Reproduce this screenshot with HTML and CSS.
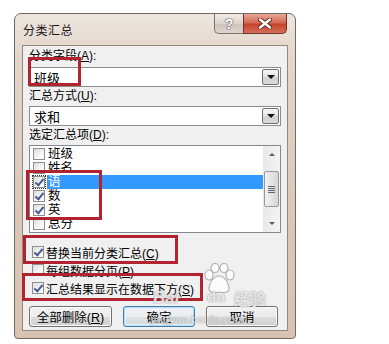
FILE: index.html
```html
<!DOCTYPE html>
<html lang="zh-CN">
<head>
    <meta charset="UTF-8">
    <title>分类汇总</title>
    <link rel="stylesheet" href="styles.css">
</head>
<body>
    <div class="window">
        <div class="titlebar">
            <span class="title">分类汇总</span>
            <div class="caption-btns">
                <span class="cap-btn help">?</span>
                <span class="cap-btn close">
                    <svg width="14" height="11" viewBox="0 0 14 11">
                        <path d="M2 1.5 L12 9.5 M12 1.5 L2 9.5" stroke="#5a2a22" stroke-width="4.2" stroke-linecap="round"/>
                        <path d="M2 1.5 L12 9.5 M12 1.5 L2 9.5" stroke="#fff" stroke-width="2.4" stroke-linecap="round"/>
                    </svg>
                </span>
            </div>
        </div>

        <div class="client">
            <div class="lbl lbl-first">分类字段(<u>A</u>):</div>
            <div class="combo">
                <span class="combo-text">班级</span>
                <span class="drop"><span class="tri"></span></span>
            </div>

            <div class="lbl">汇总方式(<u>U</u>):</div>
            <div class="combo">
                <span class="combo-text">求和</span>
                <span class="drop"><span class="tri"></span></span>
            </div>

            <div class="lbl">选定汇总项(<u>D</u>):</div>
            <div class="list">
                <div class="items">
                    <div class="item"><span class="cb"></span><span class="txt">班级</span></div>
                    <div class="item"><span class="cb"></span><span class="txt">姓名</span></div>
                    <div class="item selected"><span class="cb checked focus"></span><span class="txt">语</span></div>
                    <div class="item"><span class="cb checked"></span><span class="txt">数</span></div>
                    <div class="item"><span class="cb checked"></span><span class="txt">英</span></div>
                    <div class="item"><span class="cb"></span><span class="txt">总分</span></div>
                </div>
                <div class="vscroll">
                    <span class="sb-btn"><span class="arrow up"></span></span>
                    <span class="thumb"><span class="grip"></span></span>
                    <span class="sb-space"></span>
                    <span class="sb-btn"><span class="arrow down"></span></span>
                </div>
            </div>

            <div class="check-row first"><span class="cb checked"></span><span>替换当前分类汇总(<u>C</u>)</span></div>
            <div class="check-row"><span class="cb"></span><span>每组数据分页(<u>P</u>)</span></div>
            <div class="check-row"><span class="cb checked"></span><span>汇总结果显示在数据下方(<u>S</u>)</span></div>

            <div class="buttons">
                <button class="btn btn-wide">全部删除(<u>R</u>)</button>
                <button class="btn btn-default">确定</button>
                <button class="btn">取消</button>
            </div>
        </div>

        <!-- annotations drawn over the dialog -->
        <div class="mark mark-field"></div>
        <div class="mark mark-items"></div>
        <div class="mark mark-replace"></div>
        <div class="mark mark-below"></div>

        <div class="watermark">
            <svg class="paw" width="36" height="32" viewBox="0 0 36 32">
                <g fill="rgba(255,255,255,0.8)" stroke="rgba(110,110,110,0.5)" stroke-width="1.2">
                    <ellipse cx="8" cy="12" rx="4" ry="5"/>
                    <ellipse cx="14" cy="5" rx="4" ry="4.5"/>
                    <ellipse cx="23" cy="5" rx="4" ry="4.5"/>
                    <ellipse cx="29" cy="12" rx="4" ry="5"/>
                    <path d="M18 13 C12 13 8 21 8 25 C8 30 13 30 18 29 C23 30 28 30 28 25 C28 21 24 13 18 13 Z"/>
                </g>
            </svg>
            <span class="wm-bai">Bai</span>
            <span class="wm-du">du</span>
            <span class="wm-jy">经验</span>
            <span class="wm-url">jingyan.baidu.com</span>
        </div>
    </div>
</body>
</html>
```

FILE: styles.css
```css
body {
    margin: 0;
    background: #fff;
    font-family: "Liberation Sans", "Noto Sans CJK SC", sans-serif;
    font-size: 12px;
    color: #000;
}
u {
    text-decoration: underline;
}
.window {
    position: relative;
    box-sizing: border-box;
    width: 282px;
    height: 326px;
    margin: 13px 0 0 14px;
    border: 1px solid #6e6a66;
    border-radius: 7px 7px 4px 4px;
    background: linear-gradient(#ede6df, #e4d6ca 40px, #dcc7b6 200px, #d9c2b0);
    padding: 0 7px 7px 7px;
    display: flex;
    flex-direction: column;
}
.titlebar {
    height: 31px;
    display: flex;
    justify-content: space-between;
    align-items: flex-start;
}
.title {
    margin-top: 9px;
    margin-left: 1px;
    line-height: 16px;
    letter-spacing: 0.5px;
    color: #1a1a1a;
}
.caption-btns {
    display: flex;
    margin-right: 1px;
}
.cap-btn {
    box-sizing: border-box;
    height: 20px;
    display: flex;
    align-items: center;
    justify-content: center;
    border: 1px solid #7c736c;
    border-top: none;
}
.help {
    width: 29px;
    border-right: none;
    border-radius: 0 0 0 5px;
    background: linear-gradient(#f2ece8, #ddd3cc 50%, #cfc4bc 51%, #ddd4ce);
    color: #fff;
    font-weight: bold;
    font-size: 14px;
    text-shadow: 0 0 1px #555, 0 0 1px #555, 0 0 2px #777;
}
.close {
    width: 44px;
    border-radius: 0 0 5px 0;
    border-color: #6d3328;
    background: linear-gradient(#e9a898, #d66a54 45%, #c7432b 55%, #d4705a);
}
.client {
    flex: 1;
    border: 1px solid #8e8883;
    background: #f0f0f0;
    padding: 0 6px 0 6px;
    display: flex;
    flex-direction: column;
}
.lbl {
    height: 19px;
    line-height: 19px;
}
.lbl-first {
    height: 20px;
    margin-top: 1px;
}
.combo {
    box-sizing: border-box;
    height: 20px;
    border: 1px solid #8d8d8d;
    background: #fff;
    display: flex;
    align-items: center;
    justify-content: space-between;
    padding: 0 1px 0 4px;
}
.combo-text {
    font-size: 13px;
}
.drop {
    box-sizing: border-box;
    width: 17px;
    height: 16px;
    border: 1px solid #6f6f6f;
    border-radius: 2px;
    background: linear-gradient(#f6f6f6, #e4e4e4 50%, #d2d2d2 51%, #dadada);
    display: flex;
    align-items: center;
    justify-content: center;
}
.tri {
    width: 0;
    height: 0;
    border-left: 4px solid transparent;
    border-right: 4px solid transparent;
    border-top: 4px solid #111;
}
.list {
    box-sizing: border-box;
    height: 88px;
    border: 1px solid #828790;
    background: #fff;
    display: flex;
    padding-top: 1px;
}
.items {
    flex: 1;
    padding-left: 3px;
    overflow: hidden;
}
.item {
    height: 14px;
    display: flex;
    align-items: center;
}
.item .txt {
    margin-left: 2px;
    padding-left: 1px;
    line-height: 14px;
    font-size: 12.5px;
}
.item.selected .txt {
    flex: 1;
    background: #3399ff;
    color: #fff;
}
.cb {
    box-sizing: border-box;
    flex: none;
    width: 12px;
    height: 12px;
    border: 1px solid #8f8f8f;
    background: linear-gradient(135deg, #dcdcdc, #f6f6f6 60%, #fff);
    position: relative;
}
.cb.checked::after {
    content: "";
    position: absolute;
    left: 3px;
    top: 0px;
    width: 3px;
    height: 7px;
    border: solid #4a5d92;
    border-width: 0 2px 2px 0;
    transform: rotate(40deg);
}
.cb.focus {
    outline: 1px dotted #333;
    outline-offset: 0;
}
.vscroll {
    width: 17px;
    display: flex;
    flex-direction: column;
    background: linear-gradient(90deg, #e8e8e8, #f4f4f4);
    margin-top: -1px;
}
.sb-btn {
    height: 17px;
    display: flex;
    align-items: center;
    justify-content: center;
}
.arrow {
    width: 0;
    height: 0;
    border-left: 3px solid transparent;
    border-right: 3px solid transparent;
}
.arrow.up {
    border-bottom: 3px solid #5d5d5d;
}
.arrow.down {
    border-top: 3px solid #5d5d5d;
}
.thumb {
    box-sizing: border-box;
    margin-top: 8px;
    height: 36px;
    margin-left: 1px;
    margin-right: 1px;
    border: 1px solid #979797;
    border-radius: 2px;
    background: linear-gradient(90deg, #f2f2f2, #e4e4e4 50%, #d6d6d6);
    display: flex;
    align-items: center;
    justify-content: center;
}
.grip {
    width: 7px;
    height: 7px;
    background: repeating-linear-gradient(#666 0 1px, transparent 1px 2px);
}
.sb-space {
    flex: 1;
}
.check-row {
    height: 18px;
    display: flex;
    align-items: center;
    gap: 2px;
    padding-left: 3px;
    font-size: 12px;
    white-space: nowrap;
}
.check-row.first {
    margin-top: 10px;
}
.buttons {
    display: flex;
    gap: 11px;
    margin-top: 9px;
}
.btn {
    box-sizing: border-box;
    height: 21px;
    width: 72px;
    padding: 0;
    font: inherit;
    font-size: 12.5px;
    color: #000;
    border: 1px solid #707070;
    border-radius: 3px;
    background: linear-gradient(#f2f2f2, #ebebeb 50%, #dddddd 51%, #cfcfcf);
    box-shadow: inset 0 0 0 1px #fbfbfb;
}
.btn-wide {
    width: 83px;
}
.btn-default {
    border-color: #3c7fb1;
    background: linear-gradient(#f2f4f6, #e9edf0 50%, #dde2e6 51%, #d3d9de);
    box-shadow: inset 0 0 0 1px #b9dcf3, inset 0 0 0 2px #e4f2fb;
}
.mark {
    position: absolute;
    box-sizing: border-box;
    border: 3px solid #b1232f;
}
.mark-field {
    left: 13px;
    top: 43px;
    width: 53px;
    height: 29px;
}
.mark-items {
    left: 11px;
    top: 156px;
    width: 76px;
    height: 50px;
}
.mark-replace {
    left: 8px;
    top: 221px;
    width: 155px;
    height: 29px;
}
.mark-below {
    left: 7px;
    top: 259px;
    width: 181px;
    height: 28px;
}
.watermark {
    position: absolute;
    left: 136px;
    top: 249px;
    width: 120px;
    height: 66px;
    color: rgba(255, 255, 255, 0.8);
    text-shadow: 0 0 1px rgba(90, 90, 90, 0.55), 0 0 2px rgba(90, 90, 90, 0.35);
    font-weight: bold;
}
.paw {
    position: absolute;
    left: 50px;
    top: 0;
}
.wm-bai {
    position: absolute;
    left: 2px;
    top: 25px;
    font-size: 17px;
    font-style: italic;
}
.wm-du {
    position: absolute;
    left: 56px;
    top: 25px;
    font-size: 15px;
}
.wm-jy {
    position: absolute;
    left: 83px;
    top: 23px;
    font-size: 16px;
}
.wm-url {
    position: absolute;
    left: 0;
    top: 50px;
    font-size: 11px;
    font-weight: normal;
    letter-spacing: 0.3px;
}
```
